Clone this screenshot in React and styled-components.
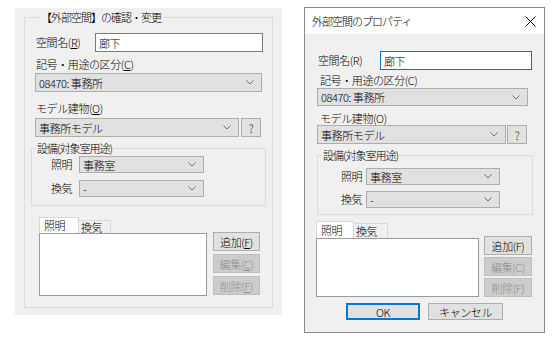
import React from 'react'
import styled, { createGlobalStyle } from 'styled-components'

const GlobalStyle = createGlobalStyle`
  * { box-sizing: border-box; }
  body {
    margin: 0;
    background: #fff;
    font-family: "Noto Sans CJK JP Light", "Noto Sans CJK JP", "Noto Sans", sans-serif;
    font-weight: 300;
    font-size: 11px;
    letter-spacing: -0.4px;
    color: #000;
  }
`

const Chevron = () => (
  <svg width="8" height="5" viewBox="0 0 8 5">
    <polyline points="0.5,0.5 4,4 7.5,0.5" fill="none" stroke="#707070" strokeWidth="1" />
  </svg>
)

const CloseIcon = () => (
  <svg width="11" height="11" viewBox="0 0 11 11">
    <path d="M0.5 0.5 L10.5 10.5 M10.5 0.5 L0.5 10.5" stroke="#000" strokeWidth="1" />
  </svg>
)

const Combo = ({ w, h = 19, mt = 0, children }) => (
  <ComboBox $w={w} $h={h} $mt={mt}>
    <span>{children}</span>
    <Chevron />
  </ComboBox>
)

const App = () => {
  return (
    <>
      <GlobalStyle />
      <Page>
        <Panel>
          <GroupBox $h={291} $pl={10}>
            <Caption $ml={5} $bg="#f0f0f0">【外部空間】の確認・変更</Caption>
            <FieldRow $mt={9}>
              <Label $w={60}>空間名(<u>R</u>)</Label>
              <TextBox $w={168}>廊下</TextBox>
            </FieldRow>
            <FieldLabel $mt={6}>記号・用途の区分(<u>C</u>)</FieldLabel>
            <Combo w={227} mt={2}>08470: 事務所</Combo>
            <FieldLabel $mt={10}>モデル建物(<u>O</u>)</FieldLabel>
            <FieldRow $mt={3}>
              <Combo w={204}>事務所モデル</Combo>
              <HelpButton $ml={2}>?</HelpButton>
            </FieldRow>
            <SubGroup $w={235} $ml={-4} $mt={11} $pb={8}>
              <Caption $ml={4} $bg="#f0f0f0">設備(対象室用途)</Caption>
              <FieldRow $mt={1} $pl={18}>
                <Label $w={29}>照明</Label>
                <Combo w={125} h={17}>事務室</Combo>
              </FieldRow>
              <FieldRow $mt={7} $pl={18}>
                <Label $w={29}>換気</Label>
                <Combo w={125} h={17}>-</Combo>
              </FieldRow>
            </SubGroup>
            <TabStrip $mt={11} $ml={4} $h={16}>
              <Tab $active $w={40} $h={16}>照明</Tab>
              <Tab $w={32} $h={13}>換気</Tab>
            </TabStrip>
            <TabBody $ml={4}>
              <ListBox $w={168} $h={63} />
              <ButtonColumn $ml={6} $mt={-1} $gap={3}>
                <SideButton $w={47}>追加(<u>F</u>)</SideButton>
                <SideButton $w={47} $disabled>編集(<u>C</u>)</SideButton>
                <SideButton $w={47} $disabled>削除(<u>F</u>)</SideButton>
              </ButtonColumn>
            </TabBody>
          </GroupBox>
        </Panel>

        <Window>
          <TitleBar>
            <TitleText>外部空間のプロパティ</TitleText>
            <CloseIcon />
          </TitleBar>
          <WindowBody>
            <FieldRow $mt={17}>
              <Label $w={63}>空間名(R)</Label>
              <TextBox $w={152} $focus>廊下</TextBox>
            </FieldRow>
            <FieldLabel $mt={4} $pl={3}>記号・用途の区分(C)</FieldLabel>
            <Combo w={211} h={18} mt={1}>08470: 事務所</Combo>
            <FieldLabel $mt={6} $pl={3}>モデル建物(O)</FieldLabel>
            <FieldRow $mt={0}>
              <Combo w={189}>事務所モデル</Combo>
              <HelpButton $ml={1}>?</HelpButton>
            </FieldRow>
            <SubGroup $w={216} $ml={0} $mt={11} $pb={6}>
              <Caption $ml={4} $bg="#f0f0f0">設備(対象室用途)</Caption>
              <FieldRow $mt={6} $pl={22}>
                <Label $w={26}>照明</Label>
                <Combo w={134} h={17}>事務室</Combo>
              </FieldRow>
              <FieldRow $mt={6} $pl={22}>
                <Label $w={26}>換気</Label>
                <Combo w={134} h={17}>-</Combo>
              </FieldRow>
            </SubGroup>
            <TabStrip $mt={6} $ml={-1} $h={17}>
              <Tab $active $w={38} $h={17}>照明</Tab>
              <Tab $w={34} $h={15}>換気</Tab>
            </TabStrip>
            <TabBody $ml={-1}>
              <ListBox $w={163} $h={59} />
              <ButtonColumn $ml={5} $mt={-2} $gap={2}>
                <SideButton $w={48}>追加(F)</SideButton>
                <SideButton $w={48} $disabled>編集(C)</SideButton>
                <SideButton $w={48} $disabled>削除(F)</SideButton>
              </ButtonColumn>
            </TabBody>
            <Footer>
              <DialogButton $w={74} $default>OK</DialogButton>
              <DialogButton $w={75}>キャンセル</DialogButton>
            </Footer>
          </WindowBody>
        </Window>
      </Page>
    </>
  )
}

export default App

const Page = styled.div`
  display: flex;
  align-items: flex-start;
  width: 559px;
  height: 343px;
  padding-left: 15px;
  overflow: hidden;
`

const Panel = styled.div`
  margin-top: 8px;
  width: 267px;
  height: 307px;
  padding: 9px 9px 0 9px;
  background: #f0f0f0;
`

const GroupBox = styled.div`
  height: ${p => p.$h}px;
  padding-left: ${p => p.$pl}px;
  border: 1px solid #dcdcdc;
`

const SubGroup = styled.div`
  width: ${p => p.$w}px;
  margin-left: ${p => p.$ml}px;
  margin-top: ${p => p.$mt}px;
  padding-bottom: ${p => p.$pb}px;
  border: 1px solid #dcdcdc;
`

const Caption = styled.div`
  width: fit-content;
  margin: -8px 0 0 ${p => p.$ml}px;
  padding: 0 1px;
  line-height: 14px;
  letter-spacing: -1px;
  background: ${p => p.$bg};
`

const FieldRow = styled.div`
  display: flex;
  align-items: center;
  margin-top: ${p => p.$mt}px;
  padding-left: ${p => p.$pl || 0}px;
`

const Label = styled.div`
  width: ${p => p.$w}px;
  flex-shrink: 0;
  padding-left: 1px;
  line-height: 13px;
`

const FieldLabel = styled.div`
  margin-top: ${p => p.$mt}px;
  padding-left: ${p => p.$pl || 1}px;
  line-height: 13px;
`

const TextBox = styled.div`
  display: flex;
  align-items: center;
  width: ${p => p.$w}px;
  height: 19px;
  padding-left: 3px;
  background: #fff;
  border: 1px solid ${p => (p.$focus ? '#0078d7' : '#7a7a7a')};
`

const ComboBox = styled.div`
  display: flex;
  align-items: center;
  justify-content: space-between;
  flex-shrink: 0;
  width: ${p => p.$w}px;
  height: ${p => p.$h}px;
  margin-top: ${p => p.$mt}px;
  padding: 0 7px 0 3px;
  background: #e1e1e1;
  border: 1px solid #adadad;
`

const HelpButton = styled.div`
  display: flex;
  align-items: center;
  justify-content: center;
  width: 20px;
  height: 19px;
  margin-left: ${p => p.$ml}px;
  background: #e1e1e1;
  border: 1px solid #adadad;
`

const TabStrip = styled.div`
  display: flex;
  align-items: flex-end;
  height: ${p => p.$h}px;
  margin-top: ${p => p.$mt}px;
  margin-left: ${p => p.$ml}px;
`

const Tab = styled.div`
  width: ${p => p.$w}px;
  height: ${p => p.$h}px;
  padding-left: ${p => (p.$active ? 4 : 2)}px;
  line-height: ${p => p.$h - 1}px;
  background: ${p => (p.$active ? '#fff' : '#f0f0f0')};
  border: 1px solid #d9d9d9;
  border-bottom: none;
  border-left: ${p => (p.$active ? '1px solid #d9d9d9' : 'none')};
`

const TabBody = styled.div`
  display: flex;
  align-items: flex-start;
  margin-left: ${p => p.$ml}px;
`

const ListBox = styled.div`
  width: ${p => p.$w}px;
  height: ${p => p.$h}px;
  background: #fff;
  border: 1px solid #9a9a9a;
`

const ButtonColumn = styled.div`
  display: flex;
  flex-direction: column;
  gap: ${p => p.$gap}px;
  margin-left: ${p => p.$ml}px;
  margin-top: ${p => p.$mt}px;
`

const SideButton = styled.div`
  display: flex;
  align-items: center;
  justify-content: center;
  width: ${p => p.$w}px;
  height: 19px;
  color: ${p => (p.$disabled ? '#8c8c8c' : '#000')};
  background: ${p => (p.$disabled ? '#cccccc' : '#e1e1e1')};
  border: 1px solid ${p => (p.$disabled ? '#bfbfbf' : '#adadad')};
`

const Window = styled.div`
  display: flex;
  flex-direction: column;
  margin-top: 7px;
  margin-left: 22px;
  width: 241px;
  height: 326px;
  background: #f0f0f0;
  border: 1px solid #888;
`

const TitleBar = styled.div`
  display: flex;
  align-items: center;
  justify-content: space-between;
  height: 26px;
  padding: 0 8px 0 7px;
  background: #fff;
`

const TitleText = styled.div`
  line-height: 13px;
  letter-spacing: -1px;
`

const WindowBody = styled.div`
  padding-left: 12px;
`

const Footer = styled.div`
  display: flex;
  gap: 8px;
  margin-top: 6px;
  padding-left: 29px;
`

const DialogButton = styled.div`
  display: flex;
  align-items: center;
  justify-content: center;
  width: ${p => p.$w}px;
  height: 17px;
  background: #e1e1e1;
  border: ${p => (p.$default ? '2px solid #0078d7' : '1px solid #adadad')};
`
